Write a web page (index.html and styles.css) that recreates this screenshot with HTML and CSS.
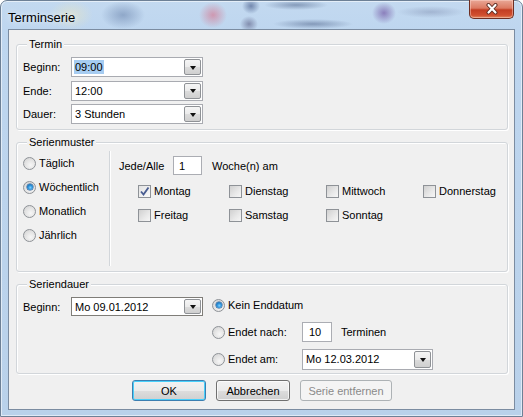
FILE: index.html
```html
<!DOCTYPE html>
<html lang="de">
<head>
<meta charset="utf-8">
<title>Terminserie</title>
<link rel="stylesheet" href="styles.css">
</head>
<body>
<div class="window">
  <header class="titlebar">
    <span class="title">Terminserie</span>
    <button class="close" aria-label="Schließen">
      <svg width="16" height="12" viewBox="0 0 16 12"><path d="M4.5 2 L11.5 9.5 M11.5 2 L4.5 9.5" stroke="#5a2a20" stroke-width="4" stroke-linecap="round" fill="none"/><path d="M4.5 2 L11.5 9.5 M11.5 2 L4.5 9.5" stroke="#fff" stroke-width="2.2" stroke-linecap="round" fill="none"/></svg>
    </button>
  </header>
  <main class="client">
    <section class="group termin">
      <div class="group-title">Termin</div>
      <div class="rows">
        <div class="row"><span class="lbl">Beginn:</span><div class="combo"><span class="val"><span class="sel">09:00</span></span><span class="dd"></span></div></div>
        <div class="row"><span class="lbl">Ende:</span><div class="combo"><span class="val">12:00</span><span class="dd"></span></div></div>
        <div class="row"><span class="lbl">Dauer:</span><div class="combo"><span class="val">3 Stunden</span><span class="dd"></span></div></div>
      </div>
    </section>

    <section class="group muster">
      <div class="group-title">Serienmuster</div>
      <div class="muster-body">
        <div class="radios">
          <div class="opt"><span class="radio"></span>Täglich</div>
          <div class="opt"><span class="radio on"></span>Wöchentlich</div>
          <div class="opt"><span class="radio"></span>Monatlich</div>
          <div class="opt"><span class="radio"></span>Jährlich</div>
        </div>
        <div class="weekly">
          <div class="every"><span class="jede">Jede/Alle</span><span class="field num">1</span><span>Woche(n) am</span></div>
          <div class="days">
            <div class="day"><span class="check on"><svg width="11" height="11" viewBox="0 0 11 11"><path d="M2 5.5 L4.5 8.5 L9.5 1.5" stroke="#4a5e92" stroke-width="1.9" fill="none"/></svg></span>Montag</div>
            <div class="day"><span class="check"></span>Dienstag</div>
            <div class="day"><span class="check"></span>Mittwoch</div>
            <div class="day"><span class="check"></span>Donnerstag</div>
            <div class="day"><span class="check"></span>Freitag</div>
            <div class="day"><span class="check"></span>Samstag</div>
            <div class="day"><span class="check"></span>Sonntag</div>
          </div>
        </div>
      </div>
    </section>

    <section class="group dauer">
      <div class="group-title">Seriendauer</div>
      <div class="dauer-body">
        <div class="dauer-left"><span class="lbl">Beginn:</span><div class="combo date dark"><span class="val">Mo 09.01.2012</span><span class="dd"></span></div></div>
        <div class="dauer-right">
          <div class="end-row"><span class="opt2"><span class="radio on"></span>Kein Enddatum</span></div>
          <div class="end-row"><span class="opt2 w"><span class="radio"></span>Endet nach:</span><span class="field cnt">10</span><span class="terminen">Terminen</span></div>
          <div class="end-row"><span class="opt2 w"><span class="radio"></span>Endet am:</span><div class="combo date wide"><span class="val">Mo 12.03.2012</span><span class="dd"></span></div></div>
        </div>
      </div>
    </section>

    <div class="buttons">
      <button class="btn default">OK</button>
      <button class="btn">Abbrechen</button>
      <button class="btn disabled">Serie entfernen</button>
    </div>
  </main>
</div>
</body>
</html>
```

FILE: styles.css
```css
* { box-sizing: border-box; }
html, body { margin: 0; padding: 0; }
body {
  width: 523px;
  height: 417px;
  overflow: hidden;
  font-family: "Liberation Sans", Arial, sans-serif;
  font-size: 11px;
  color: #000;
  background: #fff;
}

.window {
  width: 523px;
  height: 417px;
  display: flex;
  flex-direction: column;
  padding: 0 7px 6px 7px;
  border: 1px solid #6d8096;
  border-radius: 7px 7px 0 0;
  background:
    radial-gradient(ellipse 22px 14px at 122px 14px, rgba(110,135,175,0.6), transparent),
    radial-gradient(ellipse 14px 13px at 212px 14px, rgba(215,110,135,0.6), transparent),
    radial-gradient(ellipse 9px 8px at 250px 5px, rgba(50,70,120,0.55), transparent),
    radial-gradient(ellipse 9px 8px at 248px 23px, rgba(70,70,110,0.5), transparent),
    radial-gradient(ellipse 32px 5px at 295px 4px, rgba(60,80,120,0.45), transparent),
    radial-gradient(ellipse 40px 5px at 312px 23px, rgba(60,80,120,0.45), transparent),
    radial-gradient(ellipse 12px 11px at 383px 12px, rgba(110,80,160,0.65), transparent),
    radial-gradient(ellipse 34px 6px at 430px 11px, rgba(90,100,140,0.3), transparent),
    radial-gradient(ellipse 22px 15px at 70px 14px, rgba(235,230,190,0.55), transparent),
    linear-gradient(to bottom, #c3d9f0 0, #bed6ef 30px, #b9d1ea 100%);
  box-shadow: inset 0 0 0 1px rgba(255,255,255,0.55);
}

.titlebar {
  height: 28px;
  flex: none;
  display: flex;
  align-items: center;
  justify-content: space-between;
}
.title {
  font-size: 13px;
  color: #000;
  padding-top: 4px;
  text-shadow: 0 0 6px rgba(255,255,255,0.9);
}
.close {
  align-self: flex-start;
  margin-top: -1px;
  margin-right: 1px;
  width: 45px;
  height: 19px;
  padding: 0;
  border: 1px solid #6e2e22;
  border-top: none;
  border-radius: 0 0 5px 5px;
  background: linear-gradient(to bottom, #e9a897 0, #dc7a62 45%, #c23d22 55%, #d14f2f 85%, #e08a60 100%);
  box-shadow: inset 0 0 0 1px rgba(255,220,210,0.45);
  display: flex;
  align-items: center;
  justify-content: center;
}

.client {
  flex: none;
  height: 381px;
  background: #f0f0f0;
  border: 1px solid #7b8ca1;
  padding: 0 6px 0 7px;
  display: flex;
  flex-direction: column;
}

.group {
  border: 1px solid #d2d6da;
  border-radius: 3px;
  box-shadow: inset 1px 1px 0 #fff, 1px 1px 0 #fff;
  padding: 0 6px;
}
.group-title {
  margin: -7px 0 0 4px;
  padding: 0 2px;
  line-height: 13px;
  width: fit-content;
  background: #f0f0f0;
}

/* Termin */
.termin { margin-top: 14px; padding-bottom: 5px; }
.rows { margin-top: 6px; display: flex; flex-direction: column; gap: 3.5px; }
.row { display: flex; align-items: center; height: 20px; }
.lbl { width: 48px; flex: none; }

.combo {
  width: 132px;
  height: 20px;
  border: 1px solid #a9abb1;
  background: #fff;
  display: flex;
  align-items: stretch;
  padding: 1px;
}
.combo .val {
  flex: 1;
  padding-left: 2px;
  display: flex;
  align-items: center;
  white-space: nowrap;
}
.sel { background: #a6ccf1; padding: 1px 1px; margin-left: -1px; }
.dd {
  width: 17px;
  flex: none;
  border: 1px solid #8f9296;
  border-radius: 2px;
  background: linear-gradient(to bottom, #f5f5f5 0, #ebebeb 50%, #dcdcdc 51%, #cfcfcf 100%);
  display: flex;
  align-items: center;
  justify-content: center;
}
.dd::after {
  content: "";
  width: 0;
  height: 0;
  border-left: 3.5px solid transparent;
  border-right: 3.5px solid transparent;
  border-top: 4px solid #111;
  margin-top: 1px;
}

/* Serienmuster */
.muster { margin-top: 12px; padding-bottom: 5px; }
.muster-body { display: flex; height: 115px; margin-top: 2px; }
.radios { width: 87px; flex: none; display: flex; flex-direction: column; border-right: 1px solid #d2d6da; box-shadow: 1px 0 0 #fff; }
.opt { height: 24px; display: flex; align-items: center; gap: 3px; }

.radio {
  width: 13px;
  height: 13px;
  flex: none;
  border-radius: 50%;
  border: 1px solid #8e9297;
  background: radial-gradient(circle at 60% 65%, #f7f7f7 0, #e2e2e2 55%, #cfcfcf 100%);
  display: flex;
  align-items: center;
  justify-content: center;
}
.radio.on::after {
  content: "";
  width: 6px;
  height: 6px;
  border-radius: 50%;
  background: radial-gradient(circle at 55% 60%, #7fd0ff 0, #2a8fd8 45%, #0d4f8c 100%);
  box-shadow: 0 0 0 0.5px #20518a;
}

.weekly { padding: 5px 0 0 9px; flex: 1; }
.every { display: flex; align-items: center; height: 19px; }
.jede { width: 54px; flex: none; }
.field {
  height: 19px;
  border: 1px solid #abadb3;
  background: #fff;
  display: flex;
  align-items: center;
  padding-left: 5px;
  flex: none;
}
.field.num { width: 29px; margin-right: 10px; }

.days {
  margin: 7px 0 0 19px;
  display: grid;
  grid-template-columns: 91px 97px 97px auto;
  grid-auto-rows: 18px;
  row-gap: 6px;
}
.day { display: flex; align-items: center; gap: 3px; }
.check {
  width: 13px;
  height: 13px;
  flex: none;
  border: 1px solid #8e9297;
  background: linear-gradient(135deg, #d0d0d0 0, #e9e9e9 60%, #f6f6f6 100%);
  display: flex;
  align-items: center;
  justify-content: center;
}
.check.on { background: linear-gradient(135deg, #e3e3e3 0, #f1f1f1 60%, #fafafa 100%); }

/* Seriendauer */
.dauer { margin-top: 12px; padding-bottom: 4px; }
.dauer-body { display: flex; align-items: flex-start; margin-top: 4px; }
.dauer-left { display: flex; align-items: center; margin-top: 2px; height: 19px; }
.combo.date { height: 19px; }
.combo.dark { border-color: #7f7d78; }
.dauer-right { margin-left: 9px; display: flex; flex-direction: column; gap: 7px; }
.end-row { display: flex; align-items: center; height: 20px; }
.opt2 { display: flex; align-items: center; gap: 3px; }
.opt2.w { width: 90px; flex: none; }
.field.cnt { width: 30px; height: 20px; padding-left: 6px; }
.terminen { margin-left: 9px; }
.combo.wide { width: 131px; height: 21px; }

/* Buttons */
.buttons {
  margin-top: 6px;
  display: flex;
  justify-content: center;
  gap: 10px;
}
.btn {
  font-family: "Liberation Sans", Arial, sans-serif;
  font-size: 11px;
  color: #000;
  width: 74px;
  height: 21px;
  padding: 0;
  border: 1px solid #707070;
  border-radius: 3px;
  background: linear-gradient(to bottom, #f2f2f2 0, #ebebeb 50%, #dddddd 51%, #cfcfcf 100%);
  box-shadow: inset 0 0 0 1px rgba(255,255,255,0.7);
}
.btn.default {
  border-color: #3c7fb1;
  box-shadow: inset 0 0 0 1px #48d0fb;
}
.btn.disabled {
  width: 92px;
  color: #8a8a8a;
  border-color: #adb2b5;
  background: #f4f4f4;
  box-shadow: none;
}
```
